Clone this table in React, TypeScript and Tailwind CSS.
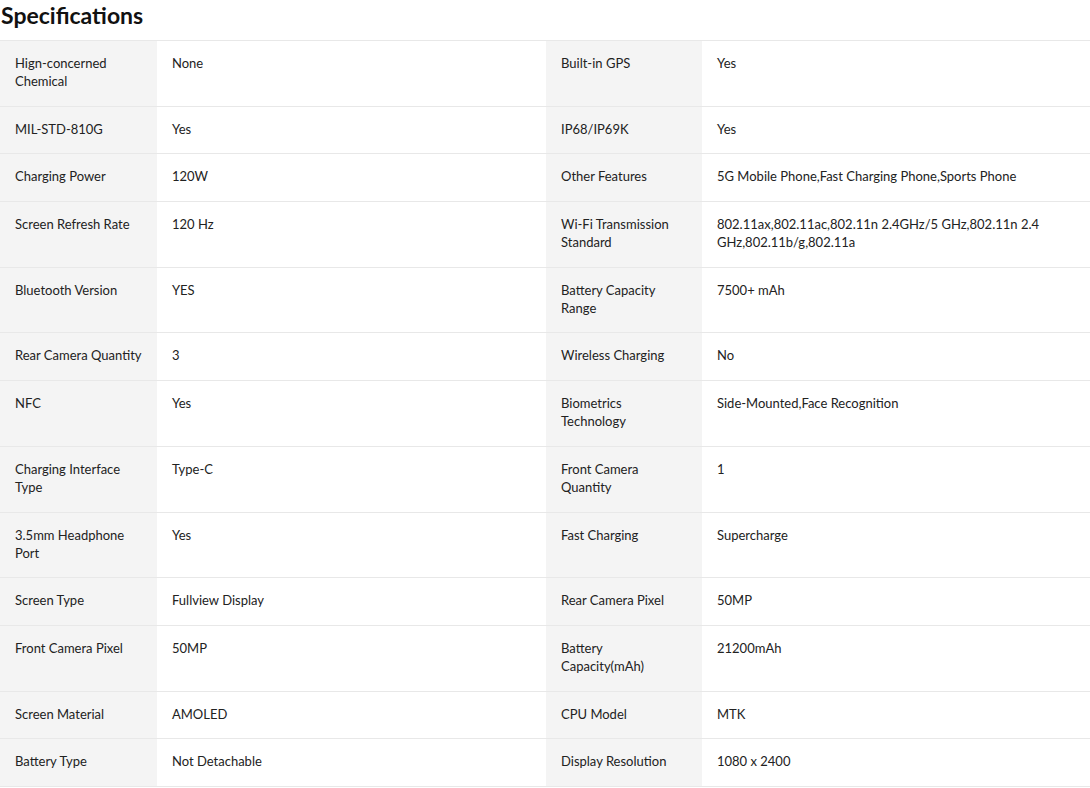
const SPECS: [string, string, string, string][] = [
  ["Hign-concerned Chemical", "None", "Built-in GPS", "Yes"],
  ["MIL-STD-810G", "Yes", "IP68/IP69K", "Yes"],
  ["Charging Power", "120W", "Other Features", "5G Mobile Phone,Fast Charging Phone,Sports Phone"],
  [
    "Screen Refresh Rate",
    "120 Hz",
    "Wi-Fi Transmission Standard",
    "802.11ax,802.11ac,802.11n 2.4GHz/5 GHz,802.11n 2.4 GHz,802.11b/g,802.11a",
  ],
  ["Bluetooth Version", "YES", "Battery Capacity Range", "7500+ mAh"],
  ["Rear Camera Quantity", "3", "Wireless Charging", "No"],
  ["NFC", "Yes", "Biometrics Technology", "Side-Mounted,Face Recognition"],
  ["Charging Interface Type", "Type-C", "Front Camera Quantity", "1"],
  ["3.5mm Headphone Port", "Yes", "Fast Charging", "Supercharge"],
  ["Screen Type", "Fullview Display", "Rear Camera Pixel", "50MP"],
  ["Front Camera Pixel", "50MP", "Battery Capacity(mAh)", "21200mAh"],
  ["Screen Material", "AMOLED", "CPU Model", "MTK"],
  ["Battery Type", "Not Detachable", "Display Resolution", "1080 x 2400"],
];

const label = "bg-[#f4f4f4] px-[15px] pt-[13px] pb-[15.7px]";
const value = "bg-white px-[15px] pt-[13px] pb-[15.7px]";

export default function App() {
  return (
    <div className="w-[1090px] bg-white font-['Lato','Noto_Sans',sans-serif] text-[#222]">
      <h2 className="h-[40px] pl-[1px] pt-[1px] text-[23px] font-bold leading-[28px] text-[#111]">
        Specifications
      </h2>
      <div className="border-t border-[#e8e8e8]">
        {SPECS.map(([l1, v1, l2, v2]) => (
          <div
            key={l1}
            className="grid grid-cols-[157px_389px_156px_1fr] border-b border-[#e8e8e8] text-[13px] leading-[18px]"
          >
            <div className={label}>{l1}</div>
            <div className={value}>{v1}</div>
            <div className={label}>{l2}</div>
            <div className={value}>{v2}</div>
          </div>
        ))}
      </div>
    </div>
  );
}
